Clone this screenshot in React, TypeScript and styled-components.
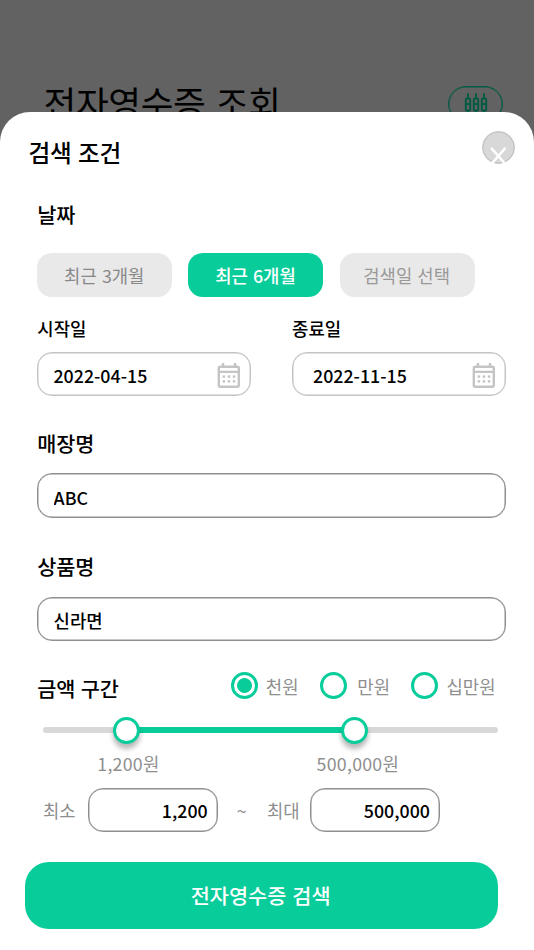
import React, { useState } from 'react';
import styled, { createGlobalStyle } from 'styled-components';

const GREEN = '#08cd9b';
const GRAY = '#8f8f8f';
const DIM_GREEN = '#055a44';

const GlobalStyle = createGlobalStyle`
  * { box-sizing: border-box; }
  body { margin: 0; background: #626262; }
  body, button, input {
    font-family: 'Noto Sans CJK KR', 'Noto Sans', sans-serif;
    font-size: 17.8px;
    letter-spacing: 0;
  }
  button { border: 0; padding: 0; cursor: pointer; word-spacing: 0.06em; }
`;

const Screen = styled.div`
  width: 534px;
  height: 950px;
  overflow: hidden;
  background: #626262;
  display: flex;
  flex-direction: column;
`;

const PageHeader = styled.header`
  flex: none;
  height: 111.6px;
  padding: 86px 31px 0 43.5px;
  display: flex;
  justify-content: space-between;
  align-items: flex-start;
`;

const PageTitle = styled.h1`
  margin: -9px 0 0;
  font-size: 35.6px;
  line-height: 50px;
  font-weight: 400;
  letter-spacing: -0.01em;
  word-spacing: 0.08em;
  color: #000;
`;

const FilterButton = styled.button`
  width: 55px;
  height: 36px;
  border: 1px solid ${DIM_GREEN};
  box-shadow: inset 0 0 0 0.5px ${DIM_GREEN};
  border-radius: 18px;
  background: transparent;
  display: flex;
  justify-content: center;
  align-items: flex-start;
  padding-top: 5px;
`;

const Sheet = styled.main`
  flex: 1;
  background: #fff;
  border-radius: 30px 30px 0 0;
  display: flex;
  flex-direction: column;
  z-index: 1;
`;

const SheetHeader = styled.div`
  display: flex;
  justify-content: space-between;
  height: 87.4px;
  padding: 19.4px 19.5px 0 28.5px;
`;

const SheetTitle = styled.h2`
  margin: 3.5px 0 0;
  height: 36px;
  line-height: 36px;
  font-size: 23.7px;
  font-weight: 500;
  letter-spacing: -0.012em;
  word-spacing: 0.06em;
`;

const CloseButton = styled.button`
  width: 33px;
  height: 33px;
  border: 1px solid #c2c2c2;
  box-shadow: inset 0 0 0 0.5px #c2c2c2;
  border-radius: 50%;
  background: #d8d8d8;
  svg { display: block; margin: -1px; }
`;

const Form = styled.div`
  padding: 0 28.3px 0 37.3px;
  display: flex;
  flex-direction: column;
`;

const SectionTitle = styled.h3<{ $gap: number; $top?: number }>`
  margin: ${(p) => p.$top ?? 0}px 0 ${(p) => p.$gap}px;
  height: 30px;
  line-height: 30px;
  font-size: 20.8px;
  font-weight: 500;
  letter-spacing: -0.01em;
  word-spacing: 0.06em;
`;

const ChipRow = styled.div`
  display: flex;
  gap: 16.2px;
`;

const Chip = styled.button<{ $active?: boolean; $muted?: boolean }>`
  width: 135px;
  height: 44.5px;
  border-radius: 14.8px;
  background: ${(p) => (p.$active ? GREEN : '#e9e9e9')};
  color: ${(p) => (p.$active ? '#fff' : p.$muted ? '#999' : '#888')};
  font-weight: ${(p) => (p.$active ? 500 : 400)};
  padding-right: 1px;
`;

const DateRow = styled.div`
  display: flex;
  justify-content: space-between;
  margin: 17.6px 0 32px;
`;

const DateField = styled.label`
  display: flex;
  flex-direction: column;
  width: 213.6px;
  font-weight: 500;
`;

const DateLabel = styled.span`
  height: 26px;
  line-height: 26px;
  margin-bottom: 11px;
`;

const DateBox = styled.span<{ $indent: number }>`
  height: 44.5px;
  border: 1px solid #c4c4c4;
  box-shadow: inset 0 0 0 0.5px #c4c4c4;
  border-radius: 14.8px;
  display: flex;
  align-items: center;
  justify-content: space-between;
  padding: 2px 9px 0 ${(p) => p.$indent}px;
`;

const TextField = styled.input<{ $after?: number }>`
  width: 100%;
  height: 44.5px;
  border: 1px solid #8f8f8f;
  box-shadow: inset 0 0 0 0.5px #8f8f8f;
  border-radius: 14.8px;
  padding: 2px 15.3px 0;
  margin-bottom: ${(p) => p.$after ?? 0}px;
  font-weight: 500;
  color: #000;
  outline: none;
`;

const PriceHeader = styled.div`
  display: flex;
  align-items: flex-start;
  height: 44.5px;
`;

const RadioGroup = styled.div`
  display: grid;
  grid-template-columns: 89px 90.7px auto;
  margin-left: auto;
  width: 274.7px;
`;

const RadioLabel = styled.label<{ $gap: number }>`
  display: flex;
  align-items: center;
  gap: ${(p) => p.$gap}px;
  height: 27px;
  color: ${GRAY};
  white-space: nowrap;
`;

const Radio = styled.input`
  appearance: none;
  width: 27px;
  height: 27px;
  margin: 0;
  border: 3px solid ${GREEN};
  border-radius: 50%;
  background: #fff;
  &:checked { background: radial-gradient(circle, ${GREEN} 7px, #fff 7.8px); }
`;

const Slider = styled.div`
  display: grid;
  grid-template-columns: 83px 228.3px 143.7px;
  align-items: center;
  width: 455px;
  height: 27px;
  margin-left: 5.9px;
`;

const Track = styled.div<{ $filled?: boolean; $round?: string }>`
  height: 6px;
  background: ${(p) => (p.$filled ? GREEN : '#d8d8d8')};
  border-radius: ${(p) => p.$round ?? 0};
  display: flex;
  align-items: center;
  justify-content: space-between;
`;

const Thumb = styled.span`
  flex: none;
  width: 27px;
  height: 27px;
  margin: 0 -13.5px;
  border: 3px solid ${GREEN};
  border-radius: 50%;
  background: #fff;
  box-shadow: 0 5px 5px rgba(0, 0, 0, 0.28);
  z-index: 1;
`;

const SliderValues = styled.div`
  display: flex;
  gap: 157px;
  padding: 6px 0 0 60px;
  height: 44px;
  line-height: 26px;
  color: ${GRAY};
  letter-spacing: 0.25px;
`;

const RangeRow = styled.div`
  display: flex;
  align-items: center;
  height: 44.5px;
  padding-left: 5.7px;
  color: ${GRAY};
`;

const RangeLabel = styled.span<{ $width: number }>`
  flex: none;
  width: ${(p) => p.$width}px;
`;

const RangeDivider = styled.span`
  flex: none;
  width: 48.8px;
  padding-left: 18.7px;
`;

const RangeField = styled(TextField)`
  flex: none;
  width: 130.5px;
  padding: 0 9.5px;
  text-align: right;
`;

const SearchButton = styled.button`
  width: 472.7px;
  height: 67px;
  margin: 29.5px 0 0 25.3px;
  padding: 0 2px 1px 0;
  border-radius: 24px;
  background: ${GREEN};
  color: #fff;
  font-size: 20.8px;
  font-weight: 500;
`;

const FilterIcon = () => (
  <svg width="24" height="23" viewBox="0 0 24 23" fill="none" stroke={DIM_GREEN} strokeWidth="2">
    {[4, 12, 20].map((x) => (
      <g key={x}>
        <path d={`M${x} 2v4M${x} 19v3`} strokeLinecap="round" />
        <rect x={x - 2.2} y="6.6" width="4.4" height="12" rx="1.2" />
        <path d={`M${x - 2} 12h4`} />
      </g>
    ))}
  </svg>
);

const CalendarIcon = () => (
  <svg width="24" height="26" viewBox="0 0 24 26" fill="none" stroke="#c4c4c4" strokeWidth="2.4">
    <rect x="1.8" y="4.7" width="20" height="20" rx="1.5" />
    <path d="M1.8 9.9h20M6 0.9v4M18 0.9v4" />
    <g fill="#c4c4c4" stroke="none">
      {[13.4, 18.2].map((y) =>
        [5.6, 10.7, 15.8].map((x) => <rect key={`${x}-${y}`} x={x} y={y} width="2.5" height="2.4" />),
      )}
    </g>
  </svg>
);

const UNITS = [
  { label: '천원', gap: 7.8 },
  { label: '만원', gap: 10.3 },
  { label: '십만원', gap: 8.8 },
];

export default function App() {
  const [period, setPeriod] = useState('최근 6개월');
  const [unit, setUnit] = useState('천원');

  return (
    <>
      <GlobalStyle />
      <Screen>
        <PageHeader>
          <PageTitle>전자영수증 조회</PageTitle>
          <FilterButton aria-label="필터"><FilterIcon /></FilterButton>
        </PageHeader>
        <Sheet>
          <SheetHeader>
            <SheetTitle>검색 조건</SheetTitle>
            <CloseButton aria-label="닫기">
              <svg width="33" height="33" viewBox="0 0 33 33" fill="none" stroke="#fff" strokeWidth="2.4" strokeLinecap="round">
                <path d="M9.8 17.6l13 14.9M22.8 17.6L9.8 32.5" />
              </svg>
            </CloseButton>
          </SheetHeader>
          <Form>
            <SectionTitle $gap={23.6}>날짜</SectionTitle>
            <ChipRow>
              {['최근 3개월', '최근 6개월', '검색일 선택'].map((name) => (
                <Chip key={name} $active={period === name} $muted={name === '검색일 선택'} onClick={() => setPeriod(name)}>
                  {name}
                </Chip>
              ))}
            </ChipRow>
            <DateRow>
              <DateField>
                <DateLabel>시작일</DateLabel>
                <DateBox $indent={15.2}>2022-04-15<CalendarIcon /></DateBox>
              </DateField>
              <DateField>
                <DateLabel>종료일</DateLabel>
                <DateBox $indent={19.9}>2022-11-15<CalendarIcon /></DateBox>
              </DateField>
            </DateRow>
            <SectionTitle $gap={15.2}>매장명</SectionTitle>
            <TextField defaultValue="ABC" $after={33.5} />
            <SectionTitle $gap={15.2}>상품명</SectionTitle>
            <TextField defaultValue="신라면" $after={31.2} />
            <PriceHeader>
              <SectionTitle $gap={0} $top={0.8}>금액 구간</SectionTitle>
              <RadioGroup>
                {UNITS.map(({ label, gap }) => (
                  <RadioLabel key={label} $gap={gap}>
                    <Radio type="radio" name="unit" checked={unit === label} onChange={() => setUnit(label)} />
                    {label}
                  </RadioLabel>
                ))}
              </RadioGroup>
            </PriceHeader>
            <Slider>
              <Track $round="3px 0 0 3px" />
              <Track $filled><Thumb /><Thumb /></Track>
              <Track $round="0 3px 3px 0" />
            </Slider>
            <SliderValues><span>1,200원</span><span>500,000원</span></SliderValues>
            <RangeRow>
              <RangeLabel $width={44.7}>최소</RangeLabel>
              <RangeField defaultValue="1,200" />
              <RangeDivider>~</RangeDivider>
              <RangeLabel $width={43}>최대</RangeLabel>
              <RangeField defaultValue="500,000" />
            </RangeRow>
          </Form>
          <SearchButton>전자영수증 검색</SearchButton>
        </Sheet>
      </Screen>
    </>
  );
}
